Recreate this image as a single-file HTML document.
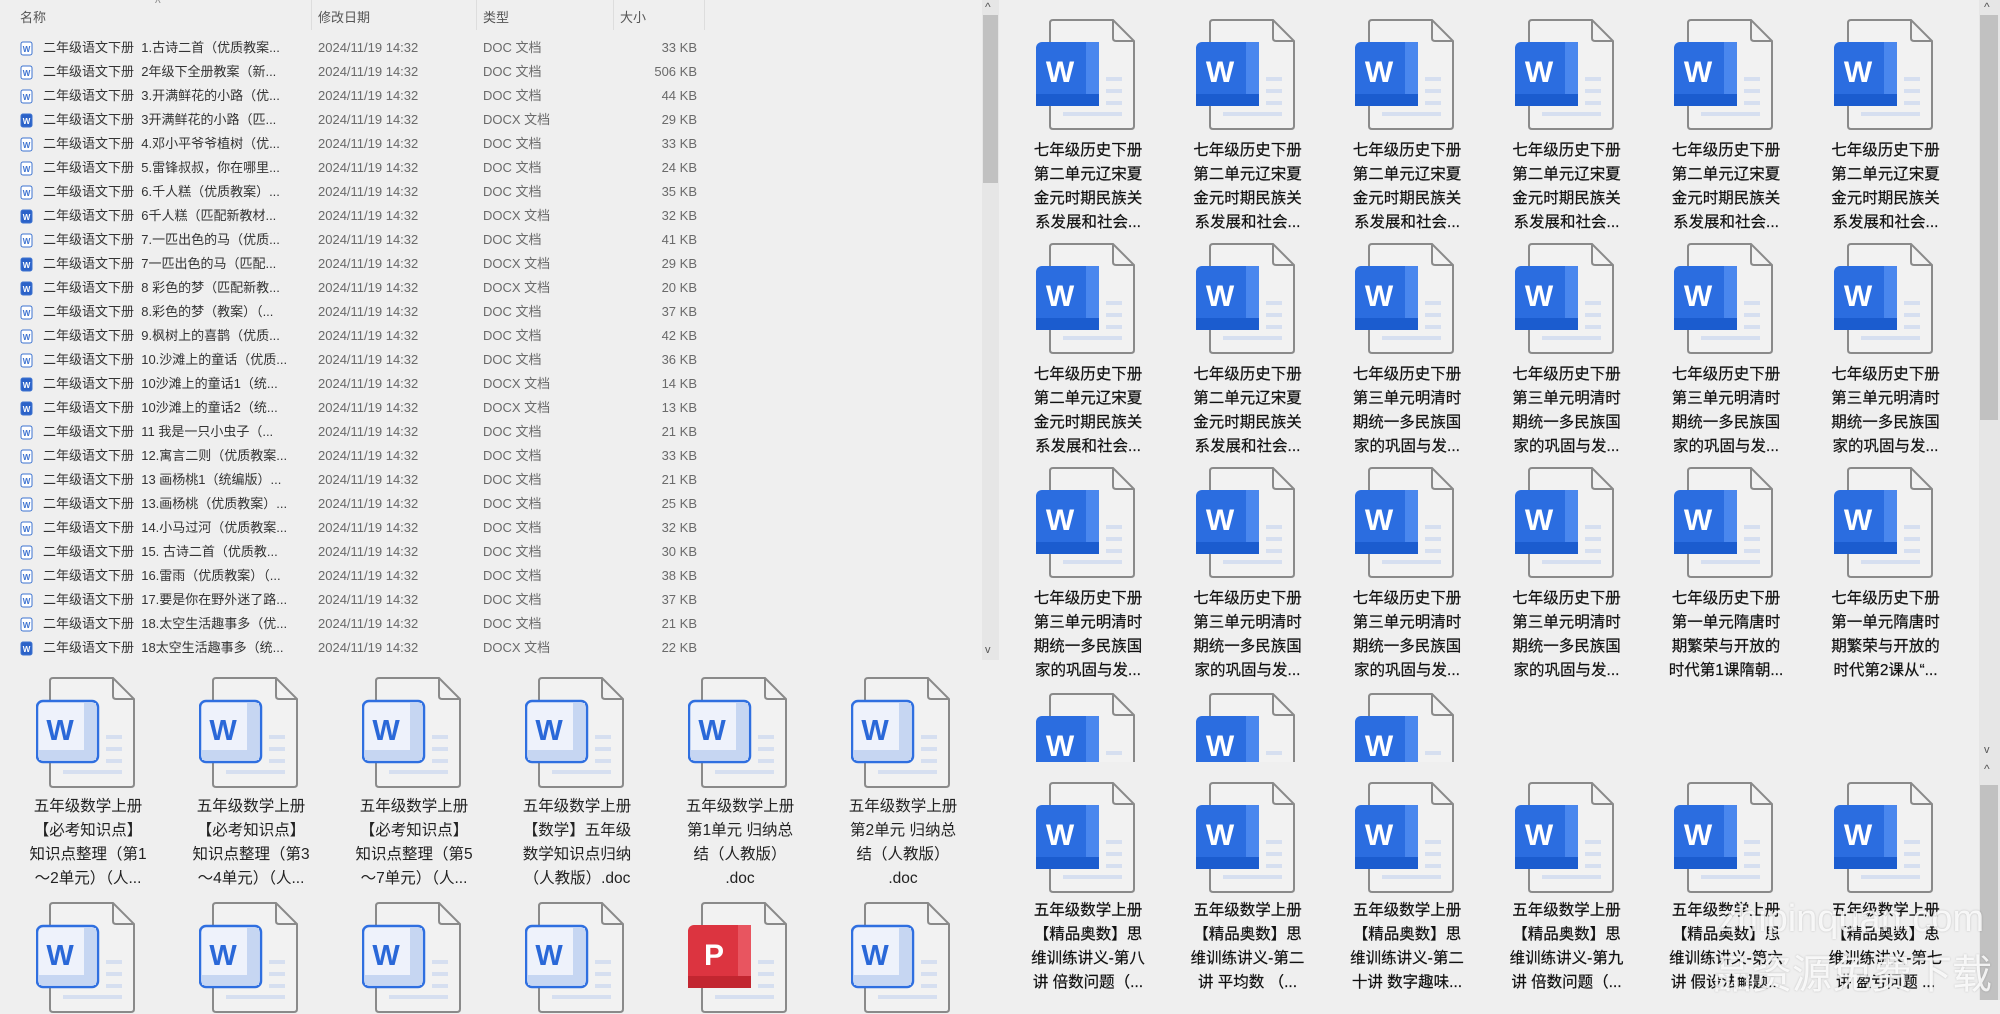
<!DOCTYPE html>
<html><head><meta charset="utf-8"><style>
body{margin:0;width:2000px;height:1000px;overflow:hidden;background:#efefef;font-family:"Liberation Sans","Noto Sans CJK SC",sans-serif;position:relative}
.a{position:absolute;white-space:nowrap}
.h{font-size:13px;color:#555;top:7px}
.r{font-size:13px;color:#333;line-height:18px;height:18px}
.g{color:#6a6a6a}
.lbl{position:absolute;width:150px;text-align:center;font-size:15.5px;line-height:24px;color:#222}
.rl{color:#111;-webkit-text-stroke:0.2px #111}
.vl{position:absolute;top:0;width:1px;height:30px;background:#ddd}
</style></head><body>
<div id="root"></div>
<div class="a h" style="left:20px">名称</div>
<div class="a" style="left:155px;top:-4px;font-size:12px;color:#888">^</div>
<div class="vl" style="left:311px"></div><div class="vl" style="left:476px"></div><div class="vl" style="left:613px"></div><div class="vl" style="left:704px"></div>
<div class="a h" style="left:318px">修改日期</div>
<div class="a h" style="left:483px">类型</div>
<div class="a h" style="left:620px">大小</div>
<div class="a" style="left:982px;top:0;width:17px;height:660px;background:#e6e6e6"></div>
<div class="a" style="left:983px;top:15px;width:15px;height:168px;background:#c1c1c1"></div>
<div class="a" style="left:985px;top:0px;font-size:12px;color:#555">^</div>
<div class="a" style="left:985px;top:644px;font-size:11px;color:#555">v</div>
<div class="a" style="left:1979px;top:0;width:21px;height:1000px;background:#e6e6e6"></div>
<div class="a" style="left:1980px;top:15px;width:18px;height:405px;background:#c1c1c1"></div>
<div class="a" style="left:1980px;top:785px;width:18px;height:215px;background:#c1c1c1"></div>
<div class="a" style="left:1984px;top:0px;font-size:12px;color:#555">^</div>
<div class="a" style="left:1984px;top:744px;font-size:11px;color:#555">v</div>
<div class="a" style="left:1984px;top:762px;font-size:12px;color:#555">^</div>
<script>
const R=document.getElementById('root');let H='';
const names=["1.古诗二首（优质教案...","2年级下全册教案（新...","3.开满鲜花的小路（优...","3开满鲜花的小路（匹...","4.邓小平爷爷植树（优...","5.雷锋叔叔，你在哪里...","6.千人糕（优质教案）...","6千人糕（匹配新教材...","7.一匹出色的马（优质...","7一匹出色的马（匹配...","8 彩色的梦（匹配新教...","8.彩色的梦（教案）（...","9.枫树上的喜鹊（优质...","10.沙滩上的童话（优质...","10沙滩上的童话1（统...","10沙滩上的童话2（统...","11 我是一只小虫子（...","12.寓言二则（优质教案...","13 画杨桃1（统编版）...","13.画杨桃（优质教案）...","14.小马过河（优质教案...","15. 古诗二首（优质教...","16.雷雨（优质教案）（...","17.要是你在野外迷了路...","18.太空生活趣事多（优...","18太空生活趣事多（统..."];
const dx=[0,0,0,1,0,0,0,1,0,1,1,0,0,0,1,1,0,0,0,0,0,0,0,0,0,1];
const sz=["33","506","44","29","33","24","35","32","41","29","20","37","42","36","14","13","21","33","21","25","32","30","38","37","21","22"];
for(let i=0;i<26;i++){const y=39+i*24;
const x=dx[i];
H+=`<svg class="a" style="left:20px;top:${y+2}px" width="13" height="15"><rect x="1" y="1" width="11" height="13" rx="2" fill="${x?'#2b62c8':'#fff'}" stroke="#3d73d0"/><text x="6.5" y="11" font-size="8" text-anchor="middle" fill="${x?'#fff':'#3d73d0'}" font-family="Liberation Sans" font-weight="bold">W</text></svg>`;
H+=`<div class="a r" style="left:43px;top:${y}px">二年级语文下册&nbsp; ${names[i]}</div><div class="a r g" style="left:318px;top:${y}px">2024/11/19 14:32</div><div class="a r g" style="left:483px;top:${y}px">${x?'DOCX':'DOC'} 文档</div><div class="a r g" style="left:560px;width:137px;text-align:right;top:${y}px">${sz[i]} KB</div>`;}
function doc(){return `<path d="M14 4 Q14 1 17 1 H77 L98 22 V107 Q98 110 95 110 H17 Q14 110 14 107 Z" fill="#f2f2f2" stroke="#8a8a8a" stroke-width="2"/><path d="M77 1 V19 Q77 22 80 22 H98" fill="none" stroke="#8a8a8a" stroke-width="2"/>`}
function lines(){return `<rect x="70" y="58" width="16" height="4" fill="#d6dff0"/><rect x="70" y="70" width="16" height="4" fill="#d6dff0"/><rect x="70" y="82" width="16" height="4" fill="#d6dff0"/><rect x="27" y="93" width="59" height="4" fill="#d6dff0"/>`}
function iconR(l,t,clip){return `<svg class="a" style="left:${l}px;top:${t}px" width="100" height="${clip||112}">${doc()}${lines()}<rect x="0" y="23" width="63" height="64" rx="6" fill="#2b6de0"/><rect x="50" y="23" width="13" height="64" fill="#4a87ee"/><rect x="0" y="75" width="63" height="12" fill="#1b5ccf"/><text x="24" y="63" font-size="30" font-weight="bold" fill="#fff" text-anchor="middle" font-family="Liberation Sans">W</text></svg>`}
function iconL(l,t,pdf){let inner=pdf?`<rect x="0" y="23" width="63" height="63" rx="6" fill="#dc3440"/><rect x="50" y="23" width="13" height="63" fill="#e85560"/><rect x="0" y="74" width="63" height="12" fill="#c22630"/><text x="26" y="63" font-size="30" font-weight="bold" fill="#fff" text-anchor="middle" font-family="Liberation Sans">P</text>`:`<rect x="1" y="24" width="61" height="61" rx="6" fill="#eef2fb" stroke="#2f6fe0" stroke-width="2.5"/><rect x="48" y="26" width="12" height="57" fill="#c6d6f2"/><rect x="3" y="73" width="57" height="10" fill="#c6d6f2"/><text x="24" y="63" font-size="29" font-weight="bold" fill="#2a68d8" text-anchor="middle" font-family="Liberation Sans">W</text>`;
return `<svg class="a" style="left:${l}px;top:${t}px" width="100" height="112">${doc()}${lines()}${inner}</svg>`}
function lbl(cx,t,ls,cls){return `<div class="lbl ${cls||''}" style="left:${cx-75}px;top:${t}px">${ls.join('<br>')}</div>`}
const A=["七年级历史下册","第二单元辽宋夏","金元时期民族关","系发展和社会..."],B=["七年级历史下册","第三单元明清时","期统一多民族国","家的巩固与发..."];
const C=["七年级历史下册","第一单元隋唐时","期繁荣与开放的","时代第1课隋朝..."],D=["七年级历史下册","第一单元隋唐时","期繁荣与开放的","时代第2课从“..."];
const rows=[[A,A,A,A,A,A],[A,A,B,B,B,B],[B,B,B,B,C,D]];
for(let r=0;r<3;r++)for(let c=0;c<6;c++){const l=1036+c*159.5,t=19+r*224;H+=iconR(l,t)+lbl(l+52,t+120,rows[r][c],'rl');}
for(let c=0;c<3;c++)H+=iconR(1036+c*159.5,693,69);
const E=["第八/讲 倍数问题（...","第二/讲 平均数 （...","第二/十讲 数字趣味...","第九/讲 倍数问题（...","第六/讲 假设法解题...","第七/讲 盈亏问题 ..."];
for(let c=0;c<6;c++){const l=1036+c*159.5,t=782;const e=E[c].split('/');H+=iconR(l,t)+lbl(l+52,t+117,["五年级数学上册","【精品奥数】思","维训练讲义-"+e[0],e[1]],'rl');}
const F=[["五年级数学上册","【必考知识点】","知识点整理（第1","～2单元）（人..."],["五年级数学上册","【必考知识点】","知识点整理（第3","～4单元）（人..."],["五年级数学上册","【必考知识点】","知识点整理（第5","～7单元）（人..."],["五年级数学上册","【数学】五年级","数学知识点归纳","（人教版）.doc"],["五年级数学上册","第1单元 归纳总","结（人教版）",".doc"],["五年级数学上册","第2单元 归纳总","结（人教版）",".doc"]];
for(let c=0;c<6;c++){const l=36+c*163;H+=iconL(l,677)+lbl(l+52,795,F[c]);H+=iconL(l,902,c==4);}
R.innerHTML=H;
</script>
<div class="a" style="left:1718px;top:898px;font-size:38px;color:rgba(255,255,255,0.85);text-shadow:0 0 2px rgba(0,0,0,0.2)">zhipinquan.com</div>
<div class="a" style="left:1712px;top:942px;font-size:40px;color:rgba(255,255,255,0.85);font-family:'Noto Sans CJK SC',sans-serif;text-shadow:0 0 2px rgba(0,0,0,0.2)">品资源免费下载</div>
</body></html>
